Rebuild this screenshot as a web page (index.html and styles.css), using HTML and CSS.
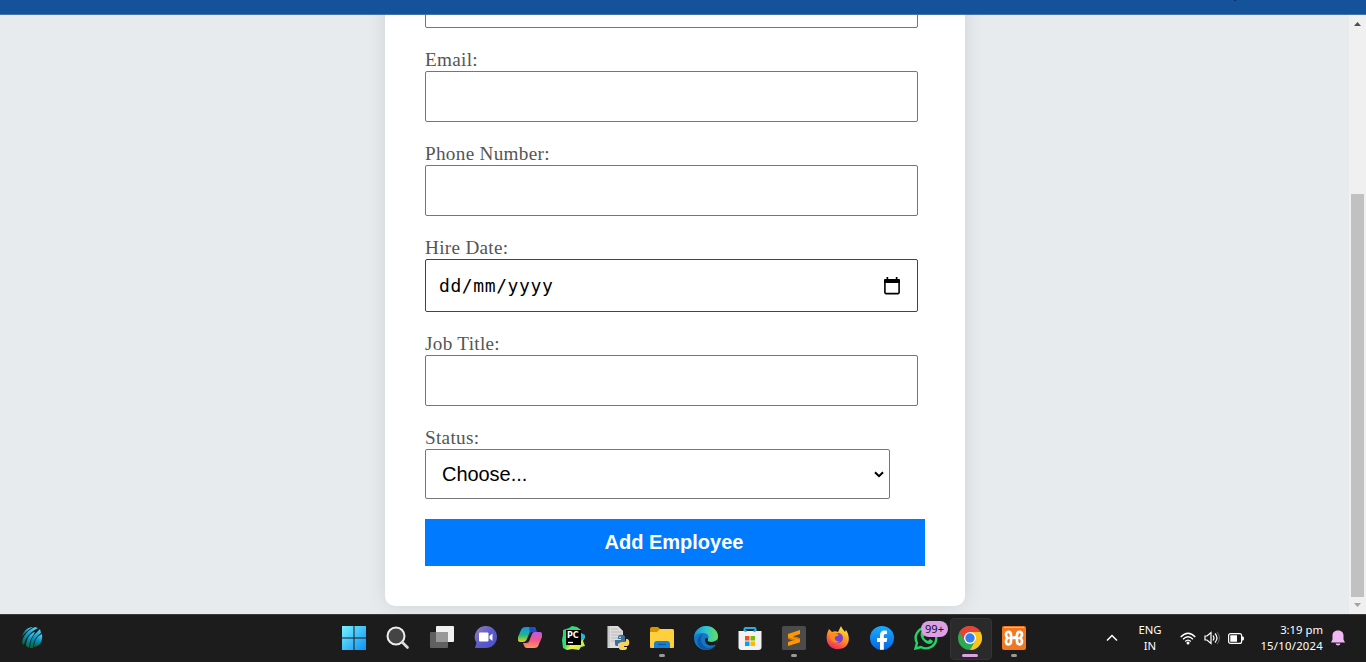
FILE: index.html
```html
<!DOCTYPE html>
<html lang="en">
<head>
<meta charset="utf-8">
<title>Add Employee</title>
<link rel="stylesheet" href="styles.css">
</head>
<body>
<header class="topbar"><span class="topbar-mark"></span></header>
<div class="viewport">
  <main class="page">
    <form class="card">
      <div class="field"><div class="input"></div></div>
      <div class="field"><label class="label">Email:</label><div class="input"></div></div>
      <div class="field"><label class="label">Phone Number:</label><div class="input"></div></div>
      <div class="field"><label class="label">Hire Date:</label>
        <div class="input date"><span class="date-text">dd/mm/yyyy</span>
          <svg class="calendar" width="16" height="18" viewBox="0 0 16 18"><rect x=".9" y="3" width="14.200" height="13.600" rx="1" fill="none" stroke="#000" stroke-width="1.600"/><path d="M0 3q0-1 1-1h14q1 0 1 1v3H0zM2.500 0h1.700v3H2.500zM11.800 0h1.700v3h-1.700z"/></svg>
        </div>
      </div>
      <div class="field"><label class="label">Job Title:</label><div class="input"></div></div>
      <div class="field"><label class="label">Status:</label>
        <div class="input select"><span>Choose...</span>
          <svg width="10" height="7" viewBox="0 0 10 7"><path d="M1 1.2l4 4 4-4" fill="none" stroke="#000" stroke-width="2"/></svg>
        </div>
      </div>
      <button class="submit" type="button">Add Employee</button>
    </form>
  </main>
  <aside class="scrollbar">
    <svg class="arrow" width="7" height="4" viewBox="0 0 7 4"><path d="M3.5 0L7 4H0z" fill="#505050"/></svg>
    <div class="thumb"></div>
    <svg class="arrow" width="7" height="4" viewBox="0 0 7 4"><path d="M3.5 4L7 0H0z" fill="#a3a3a3"/></svg>
  </aside>
</div>
<footer class="taskbar">
  <div class="widget">
    <svg width="22" height="24" viewBox="0 0 22 24"><defs><linearGradient id="ball" x1=".6" y1="0" x2=".3" y2="1"><stop offset="0" stop-color="#45cdf2"/><stop offset=".5" stop-color="#0790bd"/><stop offset="1" stop-color="#086642"/></linearGradient></defs><g fill="url(#ball)"><path d="M1 11C2 5 7 1 12 1 7 4 3 7 1 11z"/><path d="M1 17C2 9 7 4 14 1l3 1C10 6 5 10 3 19z"/><path d="M5 20C5 13 9 7 14 6l-3 5c-2 4-3 7-3 11z"/><path d="M9 22c0-6 2-12 6-15l4-4 1 4c-5 3-8 9-8 15z"/><path d="M13 21c0-6 3-11 8-13 1 7-2 12-8 13z"/></g></svg>
  </div>
  <nav class="apps">
    <div class="app"><svg width="24" height="24" viewBox="0 0 24 24"><defs><linearGradient id="win" x2="1" y2="1" gradientUnits="objectBoundingBox"><stop stop-color="#77f0ff"/><stop offset="1" stop-color="#0b91f5"/></linearGradient></defs><path d="M0 0h11.500v11.500H0zM12.500 0H24v11.500H12.500zM0 12.500h11.500V24H0zM12.500 12.500H24V24H12.500z" fill="url(#win)"/></svg></div>
    <div class="app"><svg width="24" height="24" viewBox="0 0 24 24"><circle cx="10" cy="10" r="8.500" fill="#444" stroke="#eee" stroke-width="2"/><path d="M16.500 16.500l5 5" stroke="#ddd" stroke-width="2.600" stroke-linecap="round"/></svg></div>
    <div class="app"><svg width="24" height="24" viewBox="0 0 24 24"><rect x="6" y="0" width="18" height="16" rx="1" fill="#f0f0f0"/><rect x="0" y="6" width="18" height="16" rx="1" fill="#606060"/><path d="M6 6h12v10H6z" fill="#989898"/></svg></div>
    <div class="app"><svg width="24" height="24" viewBox="0 0 24 24"><defs><linearGradient id="chat" x2="1" y2="1"><stop stop-color="#9b80b8"/><stop offset=".5" stop-color="#5c5cc8"/><stop offset="1" stop-color="#4850cd"/></linearGradient></defs><path d="M12 0a11 11 0 1 1 0 22H1l1.500-5A11 11 0 0 1 12 0z" fill="url(#chat)"/><rect x="5" y="6.500" width="9.500" height="9" rx="1" fill="#fff"/><path d="M15.500 10l3-2.500V15l-3-2.500z" fill="#fff"/></svg></div>
    <div class="app"><svg width="24" height="24" viewBox="0 0 24 24"><defs><linearGradient id="copA" x2="0" y2="1"><stop stop-color="#168fec"/><stop offset=".55" stop-color="#21ba83"/><stop offset="1" stop-color="#eecb19"/></linearGradient><linearGradient id="copB" x2="0" y2="1"><stop stop-color="#b65be8"/><stop offset=".5" stop-color="#f35688"/><stop offset="1" stop-color="#ff9960"/></linearGradient></defs><path d="M8 1h7c2 0 3 1 3 3h-2c-3 0-4 1-5 4l-2 5c-1 2-2 3-4 3H3c-3 0-4-2-3-5l3-7c1-2 2-3 5-3z" fill="url(#copA)"/><path d="M11 1h4c2 0 3 2 4 5h-3c-2 0-3 0-4 2z" fill="#204cca"/><path d="M16 22H9c-2 0-3-2-4-5h3c2 0 3-1 4-4l2-5c1-2 2-2 4-2h3c3 0 4 2 3 5l-3 7c-1 3-2 4-5 4z" fill="url(#copB)"/></svg></div>
    <div class="app"><svg width="24" height="24" viewBox="0 0 24 24"><defs><linearGradient id="py" x2="1" y2=".8"><stop stop-color="#20d385"/><stop offset=".5" stop-color="#30e36f"/><stop offset=".65" stop-color="#f6ed4b"/><stop offset="1" stop-color="#bdec48"/></linearGradient></defs><path d="M1 4l6-2 3-2 5 1 4 3v3l4 4-2 4 2 5-4 1-2 3-7-1-5 1-4-2-1-8 1-5z" fill="url(#py)"/><path d="M19 7l4 2-1 4-3 2z" fill="#0ac0ef"/><rect x="4" y="4" width="15" height="15" fill="#000"/><path d="M6 16.500h5" stroke="#fff" stroke-width="1.300"/><text x="5" y="12" class="pc">PC</text></svg></div>
    <div class="app"><svg width="24" height="24" viewBox="0 0 24 24"><path d="M1.500 0H12l5 5v17H1.500z" fill="#ddd"/><path d="M3 0v21M5 3h7M5 6h11M5 9h11M5 12h8M5 15h5" stroke="#aaa" stroke-width=".7"/><path d="M9 17v-3h6v-1h-3v-2c0-3 7-3 7 0v4c0 2-1 2-3 2h-2c-2 0-2 1-2 3h-1c-2 0-2-1-2-3z" fill="#3c7098"/><path d="M20 13h1c3 0 3 7 0 7h-3v1h3v1c0 3-8 3-8 0v-3c0-2 1-3 3-3h2c2 0 2-1 2-3z" fill="#f8d35c"/><circle cx="14" cy="11.200" r=".8" fill="#fff"/></svg></div>
    <div class="app running"><svg width="24" height="24" viewBox="0 0 24 24"><path d="M0 3q0-2 2-2h6l2 2h12q2 0 2 2v17H0z" fill="#da9300"/><path d="M0 6h7l3-3h12q2 0 2 2v15q0 2-2 2H2q-2 0-2-2z" fill="#ffcf3d"/><path d="M4 22v-4q0-3 3-3h10q3 0 3 3v4z" fill="#1680d4"/><path d="M8 18.500h8" stroke="#0b58a4" stroke-width="1.200"/></svg></div>
    <div class="app"><svg width="24" height="24" viewBox="0 0 24 24"><defs><linearGradient id="edge" x1="0" x2="1"><stop stop-color="#168ed7"/><stop offset=".5" stop-color="#30c4ce"/><stop offset="1" stop-color="#65df54"/></linearGradient></defs><circle cx="12" cy="12" r="12" fill="#1377c7"/><path d="M0 11C1 4 6 0 12 0c7 0 12 5 12 10 0 4-3 6-7 6-3 0-4-1-3-3 2-3-1-6-5-6-4 0-7 1-9 4z" fill="url(#edge)"/><path d="M9 8c-3 3-3 8 1 12 3 3 8 2 11 0-3 4-9 5-14 2C1 18 3 10 9 8z" fill="#0c59a4"/><path d="M14 13c-1 2 0 3 3 3 3 0 5-1 7-3l-1.500 5.500C17 21 11 19 11 14c0-2 2-3 3-1z" fill="#1c1c1c"/></svg></div>
    <div class="app"><svg width="24" height="24" viewBox="0 0 24 24"><path d="M6.500 6V3q0-1 1-1h9q1 0 1 1v3" fill="none" stroke="#23aee8" stroke-width="2"/><path d="M.5 5h23v16q0 3-3 3h-17q-3 0-3-3z" fill="#f2f2f2"/><path d="M6.500 5h2M15.500 5h2" stroke="#23aee8" stroke-width="2"/><path d="M7 10h4.500v4.500H7z" fill="#f25022"/><path d="M12.500 10H17v4.500h-4.500z" fill="#7fba00"/><path d="M7 15.500h4.500V20H7z" fill="#00a4ef"/><path d="M12.500 15.500H17V20h-4.500z" fill="#ffb900"/></svg></div>
    <div class="app running"><svg width="24" height="24" viewBox="0 0 24 24"><rect width="24" height="24" rx="1.500" fill="#4b4b4b"/><path d="M6 8l12-4v4l-7 2.300 7 2v4L6 20v-4l7-2.300-7-2z" fill="#ff9800"/><path d="M11 10.300l7 2v1.500l-7-2zM6 11.700l7 2-2 1-5-2z" fill="#e27600"/></svg></div>
    <div class="app"><svg width="24" height="24" viewBox="0 0 24 24"><defs><linearGradient id="fox" x1=".8" y1="0" x2=".3" y2="1"><stop stop-color="#fff044"/><stop offset=".45" stop-color="#ff9a22"/><stop offset="1" stop-color="#f02660"/></linearGradient></defs><path d="M3 3l3 3c2-1 4-1 6 0 1-2 2-4 3-6 1 3 3 4 4 6l1-2c5 7 4 19-8 19C1 23-2 12 3 3z" fill="url(#fox)"/><circle cx="12" cy="12" r="5" fill="#7740cd"/><path d="M4 8c3-2 8-1 9 1l-4 2c-1 3 2 5 5 4-4 4-11 1-10-7z" fill="#ff8a20"/></svg></div>
    <div class="app"><svg width="24" height="24" viewBox="0 0 24 24"><defs><linearGradient id="fb" x2="0" y2="1"><stop stop-color="#19adff"/><stop offset="1" stop-color="#0865e2"/></linearGradient></defs><circle cx="12" cy="12" r="12" fill="url(#fb)"/><path d="M10 23.800V16H7v-4h3V9.500C10 6 12 4.500 14 4.500l3 .2V8h-1.600C14 8 13.800 9 13.800 10v2h3.500l-.7 4h-2.800v7.800z" fill="#fff"/></svg></div>
    <div class="app"><svg width="24" height="24" viewBox="0 0 24 24"><path d="M1.500 22.500L3 17A10.300 10.300 0 1 1 7 21z" fill="#1c1c1c" stroke="#25d366" stroke-width="2.400"/><path d="M7 6l2-1 2 4-1.500 2c1 2 2.500 3 4.500 4l2-2 3 2c0 2-2 3-4 3-5-1-10-7-8-12z" fill="#25d366"/></svg><span class="badge">99+</span></div>
    <div class="app active"><svg width="24" height="24" viewBox="0 0 24 24"><circle cx="12" cy="12" r="12" fill="#2da94f"/><path d="M12 6h10.400A12 12 0 0 0 1.600 6l5.200 9z" fill="#e94235"/><path d="M12 6h10.400A12 12 0 0 1 12 24l5.200-9z" fill="#fcc41a"/><circle cx="12" cy="12" r="6" fill="#fff"/><circle cx="12" cy="12" r="4.700" fill="#347df2"/></svg></div>
    <div class="app running"><svg width="24" height="24" viewBox="0 0 24 24"><rect width="24" height="24" rx="2" fill="#ef7821"/><path d="M2 1.500h20" stroke="#fbc292" stroke-width="1"/><path d="M9 10.500V9c0-4-5-4-5-.5C4 10 5 12 6.500 12 5 12 4 14 4 15.500 4 19.500 9 19 9 15.500V12h6v3.500c0 3.500 5 4 5 0 0-1.500-1-3.500-2.500-3.500C19 12 20 10 20 8.500 20 5 15 5 15 9v1c0 1-6 3-6 1z" fill="none" stroke="#fff" stroke-width="2.700" stroke-linejoin="round"/></svg></div>
  </nav>
  <div class="tray">
    <svg class="chevron" width="12" height="8" viewBox="0 0 12 8"><path d="M1 6.500l5-5 5 5" fill="none" stroke="#fff" stroke-width="1.500"/></svg>
    <div class="lang">ENG<br>IN</div>
    <svg class="wifi" width="16" height="13" viewBox="0 0 16 13"><path d="M.7 5q7.300-7.500 14.600 0M3 7.300q5-5 10 0M5.200 9.500q2.800-2.800 5.600 0" fill="none" stroke="#fff" stroke-width="1.300"/><circle cx="8" cy="11" r="1.500" fill="#fff"/></svg>
    <svg class="sound" width="16" height="14" viewBox="0 0 16 14"><path d="M1 5h2l4-3.500v11L3 9H1z" fill="none" stroke="#fff" stroke-width="1.200"/><path d="M9 4.500q2 2.500 0 5M11 2.500q4 4.500 0 9" fill="none" stroke="#fff" stroke-width="1.200"/><path d="M13 1q5 6 0 12" fill="none" stroke="#666" stroke-width="1"/></svg>
    <svg class="battery" width="16" height="11" viewBox="0 0 16 11"><rect x=".6" y=".6" width="13" height="9.800" rx="2" fill="none" stroke="#fff" stroke-width="1.200"/><path d="M2.300 2.300H9v6.400H2.300zM14 3.500h1q1 0 1 2t-1 2h-1z" fill="#fff"/></svg>
    <div class="clock">3:19 pm<br><span class="day">15/10/2024</span></div>
    <svg class="bell" width="14" height="16" viewBox="0 0 14 16"><path d="M7 .5c4 0 5.500 2.500 5.500 5v4l1.500 3H0l1.500-3v-4C1.500 3 3 .5 7 .5zM4.500 13.500h5q-.5 2-2.500 2t-2.500-2z" fill="#efb8f4"/></svg>
  </div>
</footer>
</body>
</html>
```

FILE: styles.css
```css
* { box-sizing: border-box; }
body { margin: 0; width: 1366px; height: 662px; overflow: hidden; display: flex; flex-direction: column; font-family: "Liberation Sans", Arial, sans-serif; }
svg { display: block; flex: none; }
.topbar { height: 15px; flex: none; background: #14539a; border-bottom: 1px solid #4474ad; }
.topbar-mark { display: block; width: 2px; height: 1px; margin-left: 1234px; background: #102f59; }
.viewport { height: 599px; flex: none; display: flex; overflow: hidden; }
.page { width: 1349px; height: 599px; padding-left: 385px; background: #e7ebee; overflow: hidden; }
.card { width: 580px; height: 691px; margin: -100px 0 0; padding: 62px 40px 40px; background: #fff; border-radius: 10px; box-shadow: 0 0 20px rgba(0, 0, 0, 0.1); }
.field { margin-bottom: 21px; }
.label { display: block; height: 22px; line-height: 21px; font-family: "Liberation Serif", "Times New Roman", serif; font-size: 19.2px; letter-spacing: .3px; color: #555; }
.input { width: 493px; height: 51px; border: 1px solid #767676; border-radius: 2px; background: #fff; }
.date { height: 53px; border-color: #444; display: flex; align-items: center; justify-content: space-between; padding: 0 17px 0 13px; }
.date-text { font-family: "DejaVu Sans Mono", monospace; font-size: 18px; letter-spacing: .6px; color: #000; }
.select { width: 465px; height: 50px; display: flex; align-items: center; justify-content: space-between; padding: 0 5px 0 16px; font-size: 20px; letter-spacing: -.05px; }
.submit { display: block; width: 500px; height: 47px; margin-top: -1px; padding: 0 2px 0 0; border: 0; background: #007bff; color: #fff; font: bold 20px "Liberation Sans", Arial, sans-serif; }
.scrollbar { width: 17px; background: #f0f0f0; display: flex; flex-direction: column; align-items: center; padding: 7px 0; }
.thumb { width: 13px; height: 403px; margin: 168px 0 6px; background: #c1c1c1; flex: none; }
.taskbar { height: 48px; flex: none; display: flex; background: #1c1c1c; border-top: 1px solid #393939; color: #fff; }
.widget { width: 332px; padding: 11px 0 0 21px; }
.apps { display: flex; }
.app { position: relative; width: 44px; height: 47px; display: flex; justify-content: center; padding-top: 11px; }
.running::after, .active::after { content: ""; position: absolute; left: 19px; top: 39px; width: 6px; height: 3px; border-radius: 2px; background: #999; }
.active::before { content: ""; position: absolute; left: 2px; top: 3px; width: 40px; height: 40px; border: 1px solid #333; border-radius: 4px; background: #2a2a2a; }
.active svg { position: relative; }
.active::after { left: 14px; width: 16px; background: #dda0e5; }
.badge { position: absolute; left: 17px; top: 6px; width: 27px; height: 16px; border-radius: 8px; background: #dc9ee5; color: #111; font: 11px/16px "Noto Sans", sans-serif; text-align: center; }
.pc { font: bold 8px "DejaVu Sans", sans-serif; fill: #fff; }
.tray { flex: 1; display: flex; align-items: center; padding: 0 0 1px 70px; font: 11.3px/16px "Noto Sans", sans-serif; }
.lang { width: 30px; margin-left: 17px; text-align: center; }
.wifi { margin-left: 15px; }
.sound { margin-left: 8px; }
.battery { margin-left: 8px; }
.clock { width: 74px; margin-left: 5px; text-align: right; }
.day { letter-spacing: .25px; }
.bell { margin-left: 8px; }
```
